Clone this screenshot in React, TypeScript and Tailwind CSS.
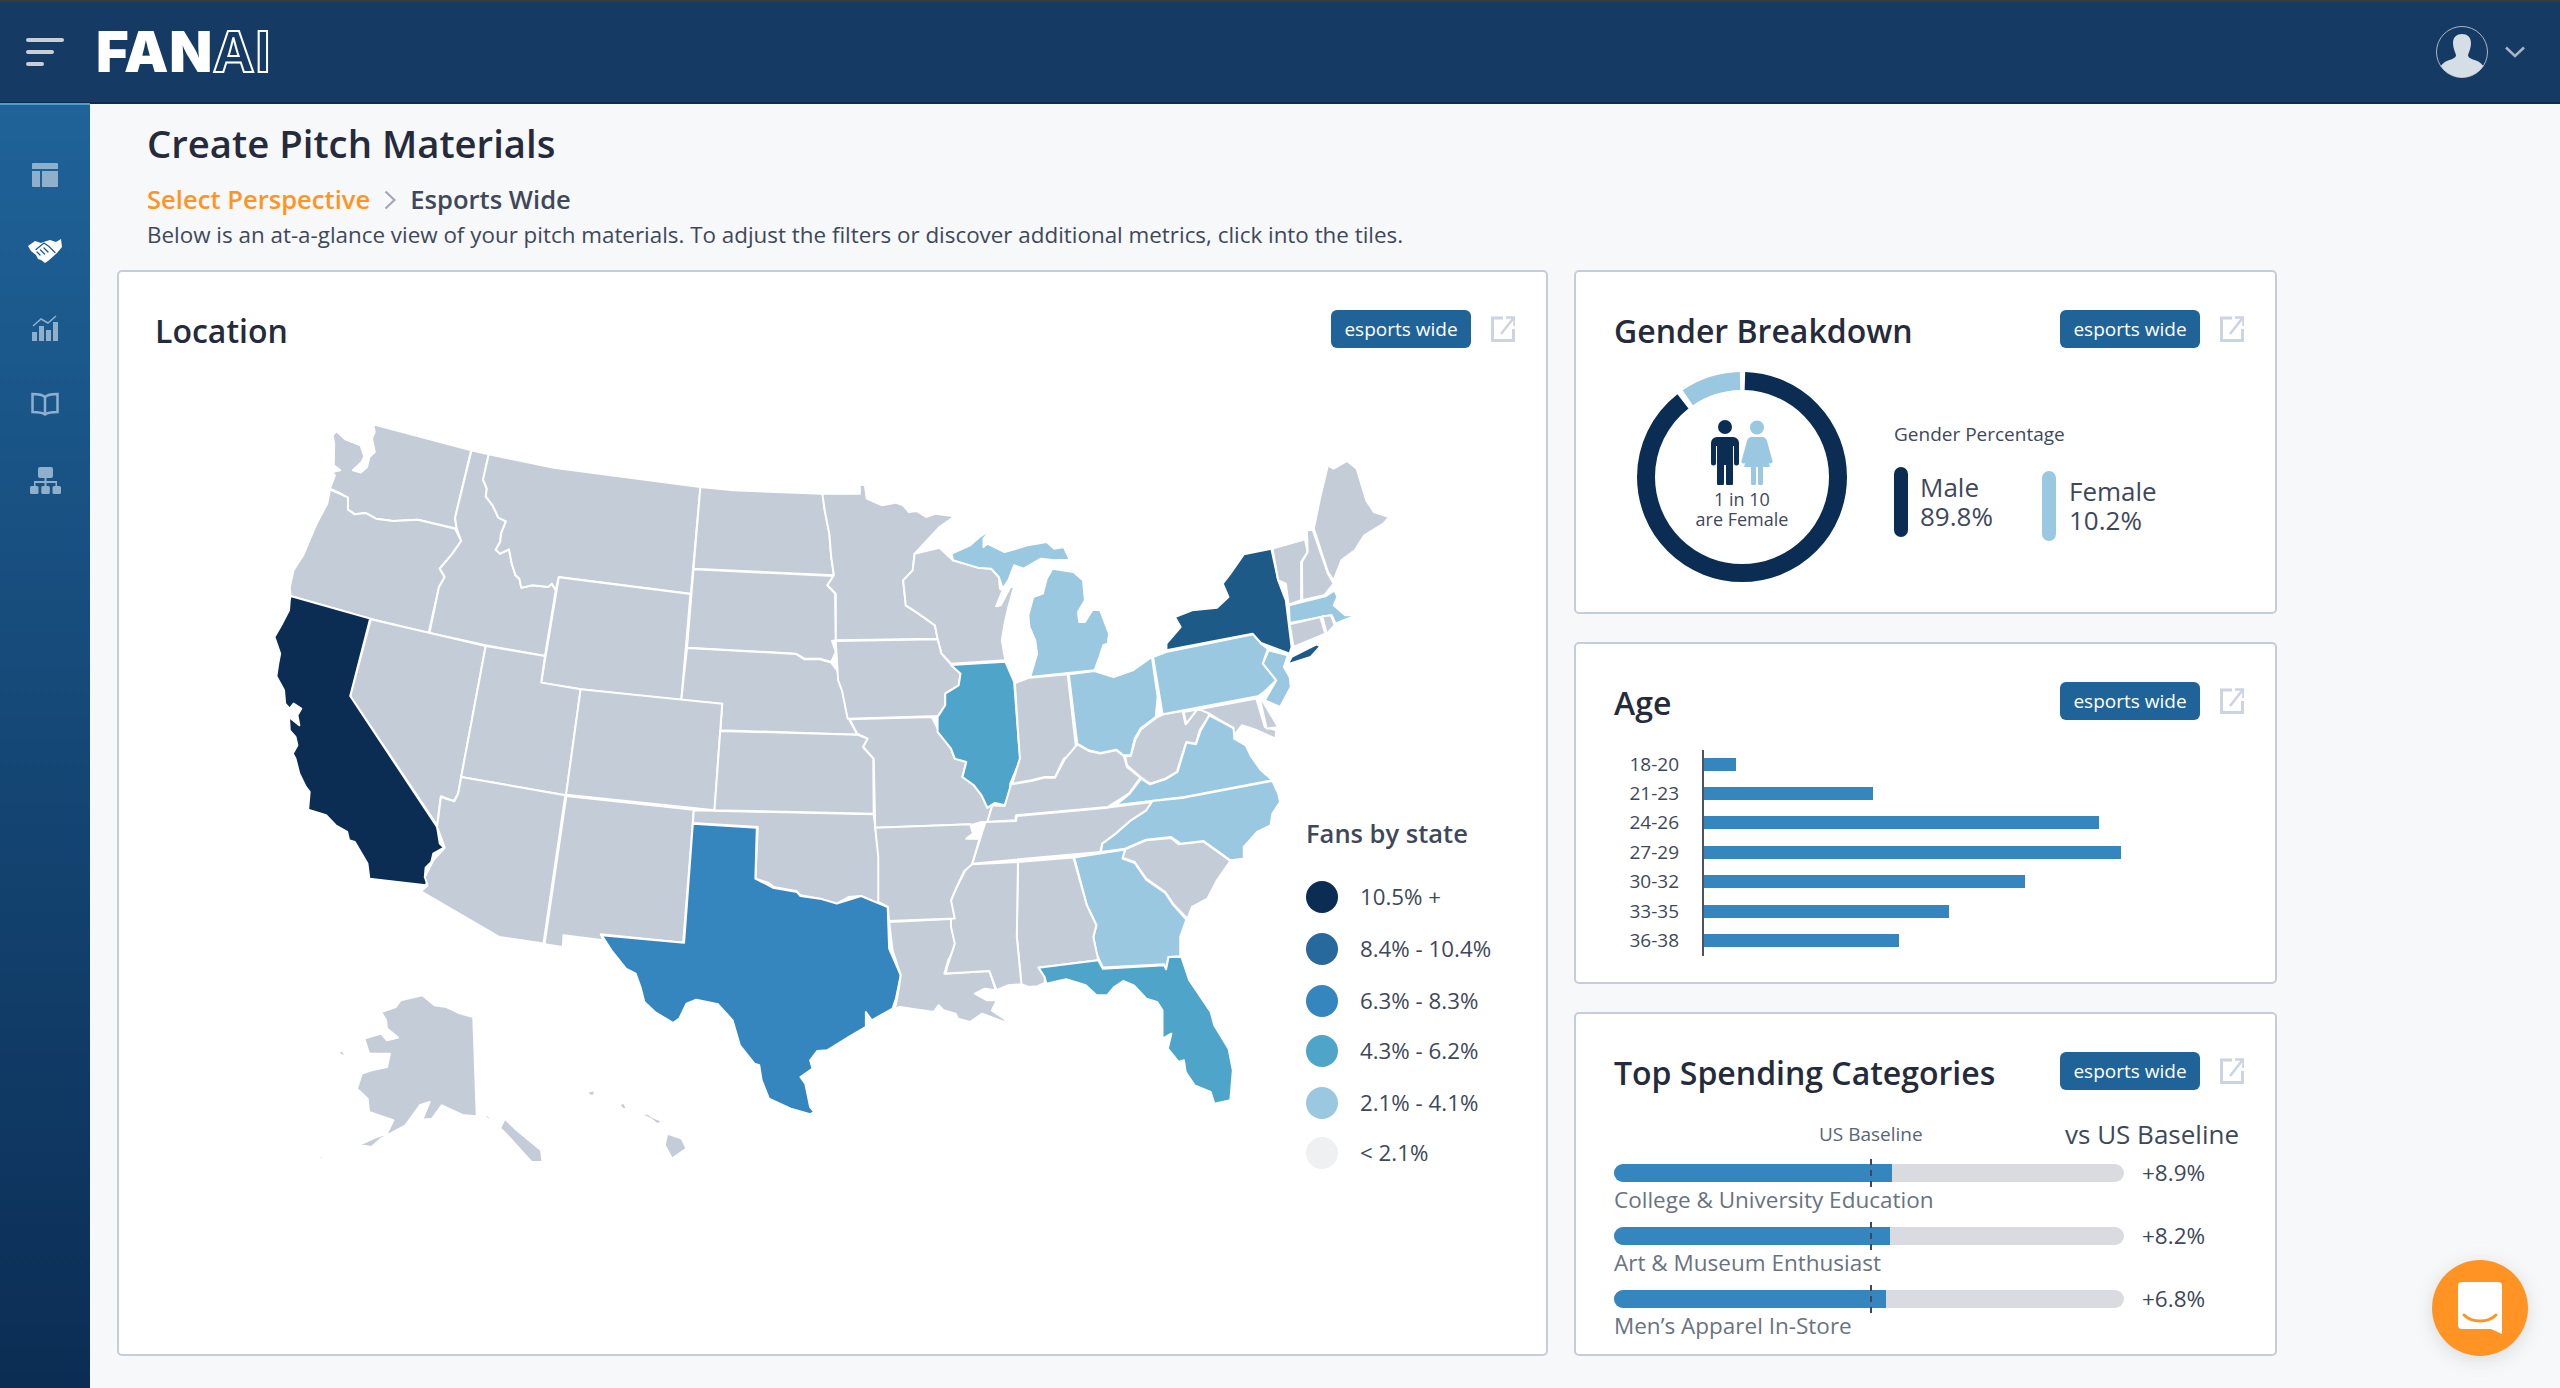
type Frame = "W" | "E" | "S" | "F";
const GRAY = "#c4ccd8";
const NAVY = "#0b2d54";
const NY = "#1d5a88";
const TX = "#3585bf";
const MID = "#4fa4c9";
const LIGHT = "#99c8e0";

const STATES: [Frame, string, string][] = [
  ["W", GRAY, "348,82 604,160 562,362 566,395 465,368 400,372 355,365 328,348 300,352 282,338 282,302 260,288 235,275 248,235 240,225 262,220 245,205 246,140 242,115 252,102 275,127 315,145 325,178 318,195 295,220 315,227 332,210 338,180 352,165 345,125 352,105"],
  ["W", GRAY, "235,278 260,290 282,302 282,338 300,352 328,348 355,365 400,372 465,368 562,395 578,432 555,470 522,515 535,540 520,570 493,708 340,665 132,597 130,570 140,520 165,475 200,380 228,320"],
  ["W", GRAY, "605,160 650,172 635,248 645,275 642,298 660,325 675,362 695,373 682,410 680,435 668,458 680,470 703,457 710,500 720,535 730,545 735,572 765,565 805,570 815,560 825,580 797,777 642,745 495,708 520,570 535,540 522,515 555,470 578,432 566,395 562,362"],
  ["W", GRAY, "650,172 820,212 1203,270 1178,590 833,540 825,580 815,560 805,570 765,565 735,572 730,545 720,535 710,500 703,457 680,470 668,458 680,435 682,410 695,373 675,362 660,325 642,298 645,275 635,248"],
  ["W", GRAY, "1203,270 1290,280 1522,290 1528,340 1540,410 1545,480 1552,535 1185,515"],
  ["W", GRAY, "1185,517 1552,537 1535,565 1555,590 1557,730 1547,732 1557,765 1545,795 1515,785 1475,785 1452,770 1168,752"],
  ["W", GRAY, "833,541 1177,591 1153,910 890,877 787,857"],
  ["W", GRAY, "1168,753 1452,771 1475,787 1515,787 1545,797 1560,820 1568,850 1583,910 1593,970 1613,1013 1255,1000 1260,920 1153,910"],
  ["W", GRAY, "342,667 642,747 578,1140 570,1190 558,1213 525,1198 515,1285 288,897"],
  ["W", NAVY, "132,597 340,665 288,897 515,1290 522,1340 533,1352 505,1370 500,1395 485,1412 483,1440 492,1450 485,1465 338,1445 333,1400 300,1335 285,1330 280,1305 250,1285 225,1255 178,1238 182,1185 172,1170 155,1130 145,1085 138,1070 150,1045 145,1020 130,1000 128,960 155,985 150,955 160,935 140,920 130,935 118,920 115,880 95,838 100,800 105,770 90,720 110,680 128,640 130,610"],
  ["W", GRAY, "642,747 797,777 787,857 890,877 852,1195 578,1140"],
  ["W", GRAY, "890,877 1260,920 1240,1240 852,1193"],
  ["W", GRAY, "578,1140 850,1195 793,1640 677,1620 473,1483 490,1465 483,1440 505,1390 535,1352 515,1290 525,1200 560,1213 570,1190"],
  ["S", GRAY, "632,-3 895,38 893,78 873,437 703,412 708,430 626,415 625,450 587,442"],
  ["S", GRAY, "895,40 1266,52 1270,95 1277,180 1277,322 1240,297 1215,300 1190,320 1155,305 1115,295 1108,283 1060,270 1050,258 1022,245 1027,90 893,78"],
  ["S", TX, "893,80 1025,92 1022,245 1040,258 1058,272 1108,285 1115,297 1155,305 1190,320 1240,297 1295,330 1298,455 1322,535 1312,605 1305,635 1262,670 1250,645 1250,690 1215,720 1170,760 1150,762 1135,790 1140,815 1115,840 1125,860 1135,930 1143,945 1135,952 1095,935 1050,905 1035,850 1030,805 1020,800 990,745 975,670 945,622 900,608 880,620 865,665 852,678 815,645 793,615 785,570 775,530 755,515 725,460 705,415 875,437"],
  ["S", GRAY, "1298,375 1435,365 1445,420 1420,490 1412,530 1505,522 1518,580 1495,575 1475,590 1500,610 1520,610 1510,640 1540,670 1535,675 1490,650 1465,675 1440,665 1435,650 1410,640 1400,625 1390,645 1320,630 1310,635 1315,600 1322,535 1305,460"],
  ["S", GRAY, "335,595 360,625 385,630 410,648 440,660 447,952 470,955 495,995 505,965 530,1000 580,1060 583,1095 560,1095 520,1030 500,1000 465,960 420,955 375,925 355,965 335,968 350,915 330,925 300,985 250,1025 230,1050 205,1045 165,1070 240,1020 262,1010 275,970 225,945 222,905 200,875 210,830 230,820 262,810 268,770 225,770 215,725 250,710 262,730 285,722 262,695 260,670 250,645 280,630 290,610"],
  ["S", GRAY, "105,1088 128,1076 130,1084"],
  ["S", GRAY, "160,768 170,760 178,782"],
  ["S", GRAY, "840,1010 870,1025 880,1055 850,1085 835,1045"],
  ["S", GRAY, "676,884 690,880 690,895 680,896"],
  ["S", GRAY, "742,925 750,916 758,938 748,935"],
  ["S", GRAY, "782,950 800,950 812,962 830,972 820,982 805,965"],
  ["E", GRAY, "-46,170 52,170 52,142 65,145 70,185 110,205 145,197 165,205 180,225 200,222 225,240 250,230 300,238 260,270 215,325 195,350 190,400 165,430 172,505 205,530 248,565 255,605 -11,610 -11,470 -33,445 -16,415 -23,360 -28,290 -40,220"],
  ["E", GRAY, "195,350 260,332 295,370 360,392 395,395 415,420 418,455 425,460 408,508 420,505 445,450 455,450 440,510 430,560 423,610 432,670 290,680 265,650 255,605 248,565 205,530 172,505 165,430 190,400"],
  ["E", LIGHT, "292,350 340,325 365,300 398,275 375,305 375,330 385,320 430,345 490,325 540,315 560,335 585,330 600,368 560,370 525,365 480,395 455,385 440,430 425,455 415,420 395,395 360,392 295,370"],
  ["E", LIGHT, "555,395 610,405 635,430 640,490 622,525 625,555 640,555 660,518 680,520 703,590 700,620 688,625 678,660 665,700 497,720 515,650 510,610 495,570 492,535 505,480 530,470 540,425"],
  ["E", GRAY, "-11,612 255,607 265,650 290,682 315,710 310,745 275,770 275,805 255,838 240,838 20,845 5,760 -5,730"],
  ["E", GRAY, "25,847 240,840 255,875 290,935 300,965 330,975 320,1020 350,1045 370,1075 385,1112 398,1105 385,1155 370,1155 350,1162 92,1172 88,965 60,930 72,905 45,890"],
  ["E", GRAY, "-313,882 45,893 72,905 60,930 87,965 88,1130 -328,1120"],
  ["E", MID, "290,684 432,674 455,735 467,915 472,965 445,1040 445,1075 430,1105 405,1098 385,1112 370,1075 350,1045 320,1020 330,975 300,965 290,935 255,885 255,840 275,805 275,770 310,745 315,710"],
  ["E", GRAY, "457,738 495,722 595,712 615,915 618,945 585,965 562,1020 535,1020 500,1030 450,1040 470,965 467,915"],
  ["E", LIGHT, "598,712 665,702 715,720 765,700 815,660 830,780 825,840 785,875 770,905 760,955 740,955 722,938 680,948 650,940 620,920"],
  ["E", GRAY, "620,922 650,942 680,950 722,940 742,958 750,990 785,1022 755,1070 700,1110 460,1135 458,1150 385,1155 398,1105 430,1107 447,1042 500,1032 535,1022 562,1022 587,967"],
  ["E", GRAY, "745,958 760,957 772,907 787,877 827,842 845,832 895,822 903,862 935,815 960,825 965,835 940,880 930,920 905,915 880,1005 850,1025 810,1040 785,1020 750,985"],
  ["E", LIGHT, "965,835 990,850 1030,875 1030,905 1060,925 1075,960 1100,1000 1130,1030 900,1080 720,1105 757,1070 787,1025 810,1042 850,1027 882,1005 905,917 930,922 942,882"],
  ["E", GRAY, "898,825 1088,785 1110,870 1140,880 1138,905 1090,880 1050,865 1030,895 1028,872 990,848 965,830 935,815 905,860"],
  ["E", GRAY, "1095,775 1145,870 1115,875"],
  ["E", LIGHT, "818,660 852,645 1080,592 1100,620 1118,635 1105,680 1140,730 1108,765 1092,778 843,832"],
  ["E", NY, "853,620 890,570 875,540 920,520 985,512 1015,480 1000,440 1020,410 1055,352 1127,335 1145,430 1165,490 1180,630 1175,650 1100,618 1078,590 853,640"],
  ["E", NY, "1170,682 1180,660 1245,622 1255,628 1230,660"],
  ["E", LIGHT, "1120,640 1170,655 1160,690 1175,720 1178,750 1150,810 1110,790 1140,730 1105,680"],
  ["E", GRAY, "1130,335 1215,307 1222,345 1205,375 1205,490 1172,503 1165,440 1145,430"],
  ["E", GRAY, "1220,280 1235,278 1275,410 1290,440 1265,475 1208,490 1207,375 1222,345"],
  ["E", GRAY, "1238,275 1255,180 1275,85 1290,95 1325,72 1350,95 1375,190 1395,225 1435,240 1420,260 1370,295 1345,340 1310,370 1290,430 1275,405"],
  ["E", LIGHT, "1173,505 1268,478 1292,460 1300,480 1290,505 1320,535 1350,535 1315,550 1295,560 1285,535 1175,558"],
  ["E", GRAY, "1175,562 1255,540 1268,590 1185,630"],
  ["E", GRAY, "1260,538 1283,535 1293,565 1272,590"],
  ["E", LIGHT, "815,1092 900,1082 1130,1032 1145,1070 1150,1095 1130,1130 1125,1165 1090,1185 1055,1230 1055,1265 1020,1270 950,1212 890,1220 865,1200 800,1208 745,1235 682,1245 685,1220 720,1190 760,1150 800,1120"],
  ["E", GRAY, "815,1095 800,1120 760,1150 720,1190 685,1220 680,1245 345,1280 365,1210 380,1155 460,1152 462,1137 700,1112"],
  ["E", GRAY, "745,1237 800,1210 865,1203 885,1222 950,1214 1020,1272 985,1330 960,1385 920,1410 908,1445 870,1400 850,1365 800,1325 770,1275 738,1262"],
  ["E", LIGHT, "612,1262 745,1238 738,1265 770,1278 800,1328 850,1368 870,1403 905,1448 889,1500 889,1558 858,1560 852,1595 847,1582 687,1592 670,1550 662,1500 670,1465 645,1405"],
  ["E", GRAY, "465,1275 610,1262 645,1405 670,1465 662,1500 675,1570 519,1592 535,1618 535,1638 516,1648 493,1650 474,1642 462,1500"],
  ["E", GRAY, "345,1282 465,1275 462,1500 474,1642 440,1645 409,1660 390,1602 276,1610 280,1590 300,1520 290,1470 290,1390 305,1350 330,1295"],
  ["E", GRAY, "92,1172 340,1162 348,1190 330,1205 365,1205 345,1282 325,1302 305,1350 290,1390 300,1445 128,1452 125,1410 100,1395 100,1260"],
  ["F", MID, "108,572 275,550 288,575 460,565 465,577 472,540 508,540 530,610 590,705 600,745 640,815 652,880 645,970 600,980 590,945 545,925 520,885 515,850 500,855 470,815 480,770 455,785 455,700 440,675 410,665 375,625 345,612 320,630 300,655 270,655 240,625 185,607 130,620 125,600"],
];

const TRANSFORMS: Record<Frame, string> = {
  W: "translate(240 400) scale(0.3827 0.3333)",
  E: "translate(840 440) scale(0.3827 0.3333)",
  S: "translate(260 800) scale(0.4847 0.3333)",
  F: "translate(1000 780) scale(0.3571 0.3333)",
};

function UsMap() {
  return (
    <svg viewBox="260 420 1140 760" className="w-[1140px] h-[760px] shrink-0">
      {STATES.map(([frame, fill, points], i) => (
        <polygon
          key={i}
          points={points}
          fill={fill}
          stroke="#ffffff"
          strokeWidth={2}
          strokeLinejoin="round"
          vectorEffect="non-scaling-stroke"
          transform={TRANSFORMS[frame]}
        />
      ))}
    </svg>
  );
}

function ExternalIcon() {
  return (
    <svg viewBox="0 0 24 26" className="w-6 h-[26px] shrink-0" fill="none" stroke="#cbd4df" strokeWidth={3}>
      <path d="M12 2H1.500v22.500h21V13" />
      <path d="M23 1.500 10 18M15 1.500h8.500V10" strokeWidth={2.500} />
    </svg>
  );
}

function CardHead({ title }: { title: string }) {
  return (
    <div className="flex items-start justify-between h-[58px]">
      <h2 className="text-[32px] leading-[44px] font-semibold text-[#252b3b] mt-[2px]">{title}</h2>
      <div className="flex items-center gap-5 mt-[3px]">
        <span className="flex items-center justify-center w-[140px] h-[38px] rounded-md bg-[#1f6399] text-white text-[19px]">esports wide</span>
        <ExternalIcon />
      </div>
    </div>
  );
}

const LEGEND: [string, string, string][] = [
  ["#0b2d54", "10.5% +", "mb-[20px]"],
  ["#27699d", "8.4% - 10.4%", "mb-[20px]"],
  ["#3585bf", "6.3% - 8.3%", "mb-[18px]"],
  ["#4fa4c9", "4.3% - 6.2%", "mb-[20px]"],
  ["#99c8e0", "2.1% - 4.1%", "mb-[18px]"],
  ["#eff0f2", "< 2.1%", ""],
];

const AGES: [string, number, string][] = [
  ["18-20", 32, "mb-[16px]"],
  ["21-23", 169, "mb-[16px]"],
  ["24-26", 395, "mb-[17px]"],
  ["27-29", 417, "mb-[16px]"],
  ["30-32", 321, "mb-[17px]"],
  ["33-35", 245, "mb-[16px]"],
  ["36-38", 195, ""],
];

const SPEND: [string, number, string, string][] = [
  ["College & University Education", 278, "+8.9%", "mb-[8px]"],
  ["Art & Museum Enthusiast", 276, "+8.2%", "mb-[8px]"],
  ["Men\u2019s Apparel In-Store", 272, "+6.8%", ""],
];

function Donut() {
  const r = 96;
  const c = 2 * Math.PI * r;
  return (
    <div className="relative w-[210px] h-[210px] shrink-0">
      <svg viewBox="0 0 210 210" className="w-[210px] h-[210px] -rotate-90">
        <circle cx="105" cy="105" r={r} fill="none" stroke="#0b2d54" strokeWidth="18" strokeDasharray={`${c * 0.898 - 6} ${c}`} strokeDashoffset={-3} />
        <circle cx="105" cy="105" r={r} fill="none" stroke="#99c8e0" strokeWidth="18" strokeDasharray={`${c * 0.102 - 6} ${c}`} strokeDashoffset={-(c * 0.898 + 3)} />
      </svg>
      <div className="absolute inset-0 flex flex-col items-center pt-[48px]">
        <svg viewBox="0 0 62 65" className="w-[62px] h-[65px]">
          <circle cx="14" cy="7" r="7" fill="#0b2d54" />
          <path d="M6 17h16a6 6 0 0 1 6 6v20a2.500 2.500 0 0 1-5 0V26h-1v37a3 3 0 0 1-7 0V45h-2v18a3 3 0 0 1-7 0V26H5v17a2.500 2.500 0 0 1-5 0V23a6 6 0 0 1 6-6z" fill="#0b2d54" />
          <circle cx="46" cy="7.500" r="7" fill="#99c8e0" />
          <path d="M41 17h10c3 0 4.500 2 5 4l5.500 20a2 2 0 0 1-4 1L53 27l6 20H52v16a2.500 2.500 0 0 1-5 0V47h-2v16a2.500 2.500 0 0 1-5 0V47h-7l6-20-4.500 15a2 2 0 0 1-4-1L36 21c.5-2 2-4 5-4z" fill="#99c8e0" />
        </svg>
        <div className="text-[18px] leading-[20px] text-center text-[#3f4859] mt-[4px]">1 in 10<br />are Female</div>
      </div>
    </div>
  );
}

export default function App() {
  return (
    <div className="w-[2560px] h-[1388px] overflow-hidden flex flex-col bg-[#f6f8fa] font-['Open_Sans',sans-serif] text-[#3f4859]">
      <header className="h-[104px] shrink-0 flex items-center justify-between bg-[#153a63] border-t-2 border-t-[#3b3a3a] border-b-2 border-b-[#0f2c4c]">
        <div className="flex items-center">
          <div className="ml-[26px] w-[38px] flex flex-col gap-[8px]">
            <div className="h-[4px] w-[38px] rounded-full bg-[#c7ced8]" />
            <div className="h-[4px] w-[28px] rounded-full bg-[#c7ced8]" />
            <div className="h-[4px] w-[18px] rounded-full bg-[#c7ced8]" />
          </div>
          <div className="ml-[32px] flex items-baseline font-black font-['Inter',sans-serif] text-[56px] leading-none tracking-[0.5px] text-white">
            <span>FAN</span>
            <span className="text-transparent font-bold [-webkit-text-stroke:2px_white]">AI</span>
          </div>
        </div>
        <div className="flex items-center mr-[35px] gap-[17px]">
          <svg viewBox="0 0 52 52" className="w-[52px] h-[52px]">
            <defs>
              <clipPath id="avatar"><circle cx="26" cy="26" r="25.500" /></clipPath>
            </defs>
            <circle cx="26" cy="26" r="25.500" fill="#153a63" stroke="#aab6c5" strokeWidth="1" />
            <g clipPath="url(#avatar)" fill="#d5dde5">
              <path d="M17 17c0-6 4-9 9-9s9 3 9 9c0 5-2 9-3 12 0 3 4 4 8 5.500 4 1.500 7 4 9 8.500V52H3v-9c2-4.500 5-7 9-8.500s8-2.500 8-5.500c-1-3-3-7-3-12z" />
            </g>
          </svg>
          <svg viewBox="0 0 20 12" className="w-5 h-3" fill="none" stroke="#a9b5c4" strokeWidth="2.500"><path d="M1 1.500 10 10l9-8.500" /></svg>
        </div>
      </header>
      <div className="flex flex-1 min-h-0">
        <aside className="w-[90px] shrink-0 border-t-2 border-t-[#43a0cf] -mt-[1px] flex flex-col items-center bg-gradient-to-b from-[#1f6399] to-[#0b2d54] text-[#8fb0cd]">
          <svg viewBox="0 0 26 24" className="w-[26px] h-[24px] mt-[58px]" fill="currentColor">
            <path d="M1 0h24a1 1 0 0 1 1 1v5H0V1a1 1 0 0 1 1-1zM0 8h8v16H1a1 1 0 0 1-1-1zM10 8h16v15a1 1 0 0 1-1 1H10z" />
          </svg>
          <svg viewBox="0 0 34 24" className="w-[34px] h-[24px] mt-[52px]">
            <path d="M0 7 7 2l6 2 4-1.500L22 1l6 2 5-3 1 8-5 6-9 8-3 2-4-3-3-1-2-4-5-4z" fill="#ffffff" />
            <path d="M8 10.500 16 4l5 3.500 6 6M9 13l3 3M12.500 11l4 4M16 9l4 4" fill="none" stroke="#1c5b8f" strokeWidth="1.300" strokeLinecap="round" />
          </svg>
          <svg viewBox="0 0 26 26" className="w-[26px] h-[26px] mt-[52px]" fill="currentColor">
            <rect x="0" y="17" width="5" height="9" /><rect x="7" y="11" width="5" height="15" /><rect x="14" y="15" width="5" height="11" /><rect x="21" y="7" width="5" height="19" />
            <path d="M1 11 9 4l7 4 8-7" fill="none" stroke="currentColor" strokeWidth="1.500" />
          </svg>
          <svg viewBox="0 0 28 24" className="w-[28px] h-[24px] mt-[51px]" fill="none" stroke="currentColor" strokeWidth="2.500">
            <path d="M14 5C11 2 6 2 1.500 2v18c5 0 9 0 12.500 2.500C17.500 20 22 20 26.500 20V2C22 2 17 2 14 5zM14 5v17" />
          </svg>
          <svg viewBox="0 0 31 27" className="w-[31px] h-[27px] mt-[51px]" fill="currentColor">
            <path d="M10 0h11a2 2 0 0 1 2 2v7a2 2 0 0 1-2 2h-4.500v3H27v5h-1.500v-3h-9v3h-2v-3h-9v3H4v-5h10.500v-3H10a2 2 0 0 1-2-2V2a2 2 0 0 1 2-2z" />
            <rect x="0" y="19" width="8.500" height="8" rx="1.500" /><rect x="11.300" y="19" width="8.500" height="8" rx="1.500" /><rect x="22.500" y="19" width="8.500" height="8" rx="1.500" />
          </svg>
        </aside>
        <main className="flex-1 min-w-0 pl-[27px]">
          <div className="pl-[30px]">
            <h1 className="text-[38.300px] leading-[50px] font-semibold text-[#252b3b] mt-[14px]">Create Pitch Materials</h1>
            <div className="flex items-center text-[25.600px] leading-[34px] font-semibold mt-[15px]">
              <span className="text-[#ff9425]">Select Perspective</span>
              <svg viewBox="0 0 12 20" className="w-[12px] h-[20px] mx-[14px]" fill="none" stroke="#a3a8b2" strokeWidth="2.200"><path d="M1.500 1.500 10.500 10l-9 8.500" /></svg>
              <span className="text-[#3f4859]">Esports Wide</span>
            </div>
            <p className="text-[22.400px] leading-[30px] mt-[3px] text-[#3f4859]">Below is an at-a-glance view of your pitch materials. To adjust the filters or discover additional metrics, click into the tiles.</p>
          </div>
          <div className="flex gap-[26px] mt-[20px]">
            <section className="relative w-[1431px] h-[1086px] bg-white border-2 border-[#c5cdda] rounded-[5px] pl-[36px] pr-[31px] pt-[35px] overflow-hidden">
              <CardHead title="Location" />
              <div className="mt-[52px] ml-[105px]">
                <UsMap />
              </div>
              <div className="absolute left-[1187px] top-[541px]">
                <h3 className="text-[25.500px] leading-[40px] font-semibold text-[#3f4859] mb-[28px]">Fans by state</h3>
                {LEGEND.map(([color, label, space]) => (
                  <div key={label} className={`flex items-center gap-[22px] h-[32px] ${space}`}>
                    <span className="w-[32px] h-[32px] rounded-full" style={{ backgroundColor: color }} />
                    <span className="text-[22.300px]">{label}</span>
                  </div>
                ))}
              </div>
            </section>
            <div className="w-[703px] flex flex-col gap-[28px]">
              <section className="h-[344px] bg-white border-2 border-[#c5cdda] rounded-[5px] pl-[38px] pr-[31px] pt-[35px]">
                <CardHead title="Gender Breakdown" />
                <div className="flex items-center mt-[7px] ml-[23px]">
                  <Donut />
                  <div className="ml-[47px] mt-[9px]">
                    <div className="text-[19px] leading-[24px] text-[#3f4859] mb-[21px]">Gender Percentage</div>
                    <div className="flex items-start">
                      <div className="w-[14px] h-[70px] rounded-full bg-[#0b2d54]" />
                      <div className="ml-[12px] mt-[6px] w-[122px] text-[26px] leading-[29px]">Male<br />89.8%</div>
                      <div className="w-[14px] h-[70px] rounded-full bg-[#99c8e0] mt-[4px]" />
                      <div className="ml-[13px] mt-[10px] text-[26px] leading-[29px]">Female<br />10.2%</div>
                    </div>
                  </div>
                </div>
              </section>
              <section className="h-[342px] bg-white border-2 border-[#c5cdda] rounded-[5px] pl-[38px] pr-[31px] pt-[35px]">
                <CardHead title="Age" />
                <div className="flex mt-[13px]">
                  <div className="w-[90px] border-r-2 border-r-[#4b5260] h-[206px] shrink-0 flex flex-col items-end pt-[8px] pr-[23px] text-[19px]">
                    {AGES.map(([label, , space]) => (
                      <div key={label} className={`h-[13px] leading-[13px] ${space}`}>{label}</div>
                    ))}
                  </div>
                  <div className="flex flex-col pt-[8px]">
                    {AGES.map(([label, w, space]) => (
                      <div key={label} className={`h-[13px] bg-[#3585bf] ${space}`} style={{ width: w }} />
                    ))}
                  </div>
                </div>
              </section>
              <section className="h-[344px] bg-white border-2 border-[#c5cdda] rounded-[5px] pl-[38px] pr-[31px] pt-[35px]">
                <CardHead title="Top Spending Categories" />
                <div className="relative flex items-center h-[32px] mt-[11px] mb-[9px]">
                  <span className="ml-[205px] text-[19px] text-[#5b6472]">US Baseline</span>
                  <span className="absolute left-[451px] text-[26px] text-[#3f4859]">vs US Baseline</span>
                </div>
                {SPEND.map(([label, w, pct, space]) => (
                  <div key={label} className={space}>
                    <div className="relative flex items-center h-[28px]">
                      <div className="w-[510px] h-[18px] rounded-full bg-[#d9dbe0] overflow-hidden">
                        <div className="h-full bg-[#3585bf]" style={{ width: w }} />
                      </div>
                      <div className="absolute left-[256px] top-0 h-[28px] w-0 border-l-2 border-dashed border-l-[#3f4859]" />
                      <span className="ml-[18px] text-[22.500px] text-[#3f4859]">{pct}</span>
                    </div>
                    <div className="text-[22.500px] leading-[28px] -mt-[1px] text-[#6b7280]">{label}</div>
                  </div>
                ))}
              </section>
            </div>
          </div>
        </main>
      </div>
      <div className="fixed left-[2432px] top-[1260px] w-[96px] h-[96px] rounded-full bg-[#ff9425] shadow-[0_4px_20px_rgba(0,0,0,0.12)] flex items-center justify-center">
        <svg viewBox="0 0 44 52" className="w-[44px] h-[52px]">
          <path d="M4 0h36a4 4 0 0 1 4 4v48l-11-5H4a4 4 0 0 1-4-4V4a4 4 0 0 1 4-4z" fill="#ffffff" />
          <path d="M6 33c8 8 24 8 32 0" fill="none" stroke="#ff9425" strokeWidth="3" strokeLinecap="round" />
        </svg>
      </div>
    </div>
  );
}
